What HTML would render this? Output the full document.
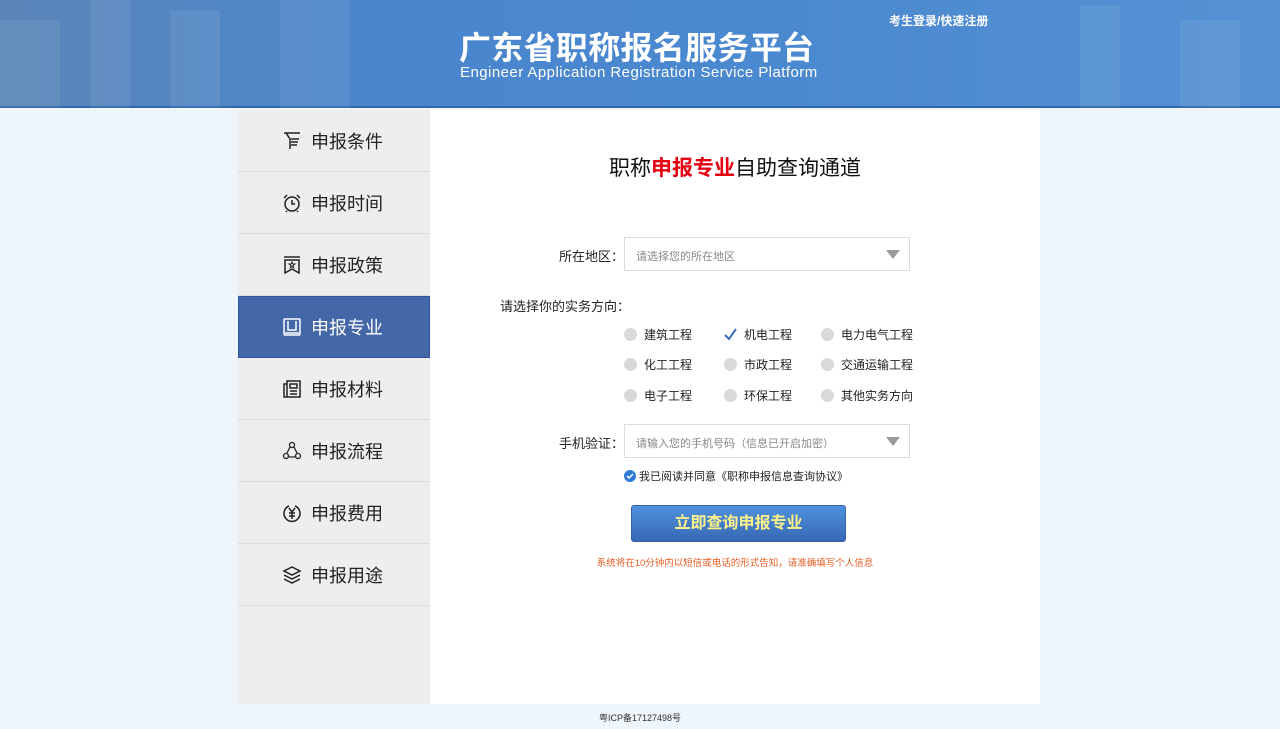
<!DOCTYPE html>
<html><head><meta charset="utf-8"><style>
*{margin:0;padding:0;box-sizing:border-box}
body{width:1280px;height:729px;background:#eef6fc;font-family:"Liberation Sans","Noto Sans CJK SC",sans-serif;position:relative;overflow:hidden;color:#222}
.hdr{position:absolute;left:0;top:0;width:1280px;height:108px;background:linear-gradient(90deg,#5a85b8 0%,#4a86cc 30%,#4a88d0 60%,#5591d2 100%);border-bottom:2px solid #2f67ad}
.hdr .b{position:absolute;background:rgba(255,255,255,.07)}
.t1{position:absolute;left:459px;top:23px;font-size:32px;font-weight:bold;color:#fff;white-space:nowrap;letter-spacing:.3px}
.t2{position:absolute;left:460px;top:64px;font-size:15px;color:#fff;letter-spacing:.45px;white-space:nowrap}
.lg{position:absolute;left:889px;top:12px;font-size:12px;color:#fff;font-weight:bold}
.side{position:absolute;left:238px;top:110px;width:192px;height:594px;background:#eeeeee}
.it{height:62px;border-bottom:1px solid #dcdcdc;display:flex;align-items:center;padding-left:44px;font-size:18px;color:#222}
.it svg{width:20px;height:20px;margin-right:9px}
.it.on{background:#4467a8;color:#fff;border:1px solid #2c55a0;padding-left:43px}
.main{position:absolute;left:430px;top:110px;width:610px;height:594px;background:#fff}
.ttl{position:absolute;left:0;width:610px;top:42px;text-align:center;font-size:21px;color:#111}
.ttl b{color:#e60012}
.lab{position:absolute;font-size:13px;color:#222}
.sel{position:absolute;left:194px;width:286px;height:34px;border:1px solid #dcdcdc;font-size:11px;color:#888;padding:10px 0 0 11px}
.sel i{position:absolute;right:9px;top:12px;border-left:7px solid transparent;border-right:7px solid transparent;border-top:9px solid #9a9a9a}
.op{position:absolute;font-size:12px;color:#222;display:flex;align-items:center}
.op i{width:13px;height:13px;border-radius:50%;background:#d9d9d9;margin-right:7px;display:inline-block}
.btn{position:absolute;left:201px;top:395px;width:215px;height:37px;border-radius:3px;background:linear-gradient(#4f92de,#3868b4);border:1px solid #3562aa;color:#fdf28a;font-size:16px;font-weight:bold;text-align:center;line-height:35px}
.note{position:absolute;left:0;width:610px;top:445px;text-align:center;font-size:9.5px;color:#e85c24}
.icp{position:absolute;top:711px;left:0;width:1280px;text-align:center;font-size:9px;color:#333}
</style></head><body>
<div class="hdr">
<div class="b" style="left:0;top:20px;width:60px;height:88px"></div>
<div class="b" style="left:90px;top:0;width:40px;height:108px"></div>
<div class="b" style="left:170px;top:10px;width:50px;height:98px"></div>
<div class="b" style="left:280px;top:0;width:70px;height:108px"></div>
<div class="b" style="left:1080px;top:5px;width:40px;height:103px"></div>
<div class="b" style="left:1180px;top:20px;width:60px;height:88px"></div>
<div class="t1">广东省职称报名服务平台</div>
<div class="t2">Engineer Application Registration Service Platform</div>
<div class="lg">考生登录/快速注册</div>
</div>
<div class="side">
<div class="it"><svg viewBox="0 0 20 20" fill="none" stroke="#222" stroke-width="1.5"><path d="M2 2h16M4 2l4 6v10M9 8h8M9 11h7M9 14h6"/></svg>申报条件</div>
<div class="it"><svg viewBox="0 0 20 20" fill="none" stroke="#222" stroke-width="1.5"><circle cx="10" cy="11" r="7"/><path d="M10 7v4h3M2 5l3-3M18 5l-3-3M5 18l-1 1M15 18l1 1"/></svg>申报时间</div>
<div class="it"><svg viewBox="0 0 20 20" fill="none" stroke="#222" stroke-width="1.5"><path d="M2 2h16M3 5h14v13l-7-4-7 4z"/><path d="M10 7l1 2h2l-2 1.5.7 2.2L10 11.5 8.3 12.7 9 10.5 7 9h2z" stroke-width="1"/></svg>申报政策</div>
<div class="it on"><svg viewBox="0 0 20 20" fill="none" stroke="#fff" stroke-width="1.5"><rect x="2" y="2" width="16" height="16" rx="1"/><path d="M6 4v9h8V4M3 16h14"/></svg>申报专业</div>
<div class="it"><svg viewBox="0 0 20 20" fill="none" stroke="#222" stroke-width="1.5"><path d="M5 2h13v16H5zM2 5h3v13H2zM8 5h7v4H8zM8 12h7M8 15h7"/></svg>申报材料</div>
<div class="it"><svg viewBox="0 0 20 20" fill="none" stroke="#222" stroke-width="1.3"><circle cx="10" cy="4" r="2.5"/><circle cx="4" cy="15" r="2.5"/><circle cx="16" cy="15" r="2.5"/><path d="M8 6l-3 6M12 6l3 6M7 16h6"/></svg>申报流程</div>
<div class="it"><svg viewBox="0 0 20 20" fill="none" stroke="#222" stroke-width="1.5"><path d="M7 3A8 8 0 1 0 13 3"/><path d="M7 5l3 4 3-4M10 9v7M7 10h6M7 13h6"/></svg>申报费用</div>
<div class="it"><svg viewBox="0 0 20 20" fill="none" stroke="#222" stroke-width="1.5"><path d="M10 2l8 4-8 4-8-4zM2 10l8 4 8-4M2 14l8 4 8-4"/></svg>申报用途</div>
</div>
<div class="main">
<div class="ttl">职称<b>申报专业</b>自助查询通道</div>
<div class="lab" style="left:129px;top:136px">所在地区：</div>
<div class="sel" style="top:127px">请选择您的所在地区<i></i></div>
<div class="lab" style="left:70px;top:186px">请选择你的实务方向：</div>
<div class="op" style="left:194px;top:216px"><i></i>建筑工程</div>
<div class="op" style="left:294px;top:216px"><svg width="13" height="13" viewBox="0 0 13 13" style="margin-right:7px"><path d="M1 7l4 4 7-10" fill="none" stroke="#3a6cc0" stroke-width="2"/></svg>机电工程</div>
<div class="op" style="left:391px;top:216px"><i></i>电力电气工程</div>
<div class="op" style="left:194px;top:246px"><i></i>化工工程</div>
<div class="op" style="left:294px;top:246px"><i></i>市政工程</div>
<div class="op" style="left:391px;top:246px"><i></i>交通运输工程</div>
<div class="op" style="left:194px;top:277px"><i></i>电子工程</div>
<div class="op" style="left:294px;top:277px"><i></i>环保工程</div>
<div class="op" style="left:391px;top:277px"><i></i>其他实务方向</div>
<div class="lab" style="left:129px;top:323px">手机验证：</div>
<div class="sel" style="top:314px">请输入您的手机号码（信息已开启加密）<i></i></div>
<div class="op" style="left:194px;top:358px;font-size:11px"><svg width="12" height="12" viewBox="0 0 12 12" style="margin-right:3px"><circle cx="6" cy="6" r="6" fill="#2f7ad6"/><path d="M3 6l2 2 4-4" fill="none" stroke="#fff" stroke-width="1.5"/></svg>我已阅读并同意《职称申报信息查询协议》</div>
<div class="btn">立即查询申报专业</div>
<div class="note">系统将在10分钟内以短信或电话的形式告知，请准确填写个人信息</div>
</div>
<div class="icp">粤ICP备17127498号</div>
</body></html>
